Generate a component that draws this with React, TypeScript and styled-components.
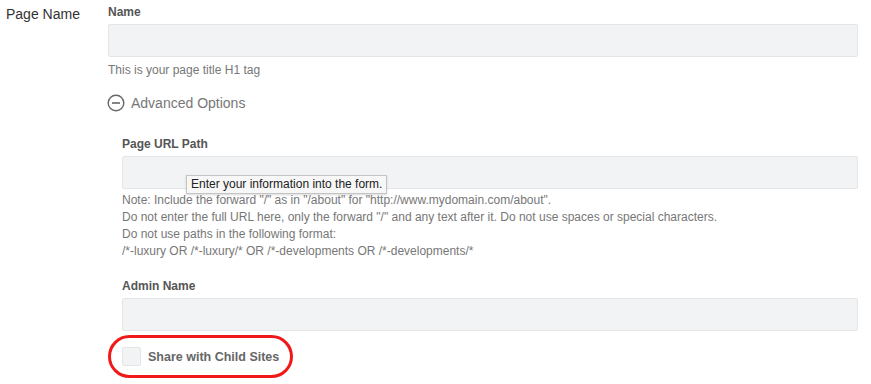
import React from 'react';
import styled, { createGlobalStyle } from 'styled-components';

const GlobalStyle = createGlobalStyle`
    html, body, #root {
        height: 100%;
    }
    body {
        margin: 0;
        background: #fff;
        font-family: 'Liberation Sans', Arial, sans-serif;
    }
`;

const FormRow = styled.div`
    display: grid;
    grid-template-columns: 108px 750px;
    padding-top: 4px;
`;

const RowLabel = styled.div`
    padding-left: 6px;
    padding-top: 1px;
    font-size: 14px;
    line-height: 18px;
    color: #333;
`;

const Field = styled.div`
    display: flex;
    flex-direction: column;
`;

const FieldLabel = styled.label<{ $gap?: number }>`
    margin-top: ${(p) => p.$gap ?? 0}px;
    font-size: 12px;
    line-height: 16px;
    font-weight: bold;
    color: #555;
`;

const InputWrap = styled.div`
    position: relative;
    margin-top: 4px;
`;

const TextInput = styled.input`
    display: block;
    box-sizing: border-box;
    width: 100%;
    height: 33px;
    margin: 0;
    background: #f2f3f4;
    border: 1px solid #e4e5e7;
    border-radius: 2px;
    outline: none;
`;

const Help = styled.div<{ $gap?: number }>`
    margin-top: ${(p) => p.$gap ?? 0}px;
    font-size: 12px;
    line-height: 17px;
    color: #777;
`;

const Toggle = styled.div`
    display: flex;
    align-items: center;
    gap: 6px;
    margin-top: 14px;
    margin-left: -1px;
    font-size: 14px;
    line-height: 20px;
    color: #777;
`;

const SubSection = styled.div`
    display: flex;
    flex-direction: column;
    padding-left: 14px;
`;

const Tooltip = styled.div`
    position: absolute;
    left: 64px;
    top: 19px;
    padding: 1px 4px;
    background: #f7f7f7;
    border: 1px solid #c4c4c4;
    box-shadow: 0 1px 2px rgba(0, 0, 0, 0.15);
    font-size: 12px;
    line-height: 15px;
    color: #222;
    white-space: nowrap;
`;

const CheckRow = styled.label`
    position: relative;
    display: flex;
    align-items: center;
    gap: 7px;
    margin-top: 16px;
    font-size: 12.5px;
    font-weight: bold;
    color: #666;
    align-self: flex-start;
`;

const Box = styled.span`
    box-sizing: border-box;
    width: 19px;
    height: 19px;
    background: #f2f3f4;
    border: 1px solid #e4e5e7;
    border-radius: 2px;
`;

const Highlight = styled.span`
    position: absolute;
    left: -14px;
    top: -12px;
    width: 185px;
    height: 43px;
    box-sizing: border-box;
    border: 3px solid #f01818;
    border-radius: 22px;
    pointer-events: none;
`;

const MinusCircle = () => (
    <svg width="18" height="18" viewBox="0 0 18 18">
        <circle cx="9" cy="9" r="7.8" fill="none" stroke="#666" strokeWidth="1.4" />
        <line x1="5" y1="9" x2="13" y2="9" stroke="#666" strokeWidth="1.6" />
    </svg>
);

export default function App() {
    return (
        <>
            <GlobalStyle />
            <FormRow>
                <RowLabel>Page Name</RowLabel>
                <Field>
                    <FieldLabel>Name</FieldLabel>
                    <InputWrap>
                        <TextInput />
                    </InputWrap>
                    <Help $gap={5}>This is your page title H1 tag</Help>
                    <Toggle>
                        <MinusCircle />
                        Advanced Options
                    </Toggle>
                    <SubSection>
                        <FieldLabel $gap={23}>Page URL Path</FieldLabel>
                        <InputWrap>
                            <TextInput />
                            <Tooltip>Enter your information into the form.</Tooltip>
                        </InputWrap>
                        <Help $gap={3}>
                            Note: Include the forward "/" as in "/about" for "http://www.mydomain.com/about".
                            <br />
                            Do not enter the full URL here, only the forward "/" and any text after it. Do not use spaces or special characters.
                            <br />
                            Do not use paths in the following format:
                            <br />
                            /*-luxury OR /*-luxury/* OR /*-developments OR /*-developments/*
                        </Help>
                        <FieldLabel $gap={18}>Admin Name</FieldLabel>
                        <InputWrap>
                            <TextInput />
                        </InputWrap>
                        <CheckRow>
                            <Box />
                            Share with Child Sites
                            <Highlight />
                        </CheckRow>
                    </SubSection>
                </Field>
            </FormRow>
        </>
    );
}
